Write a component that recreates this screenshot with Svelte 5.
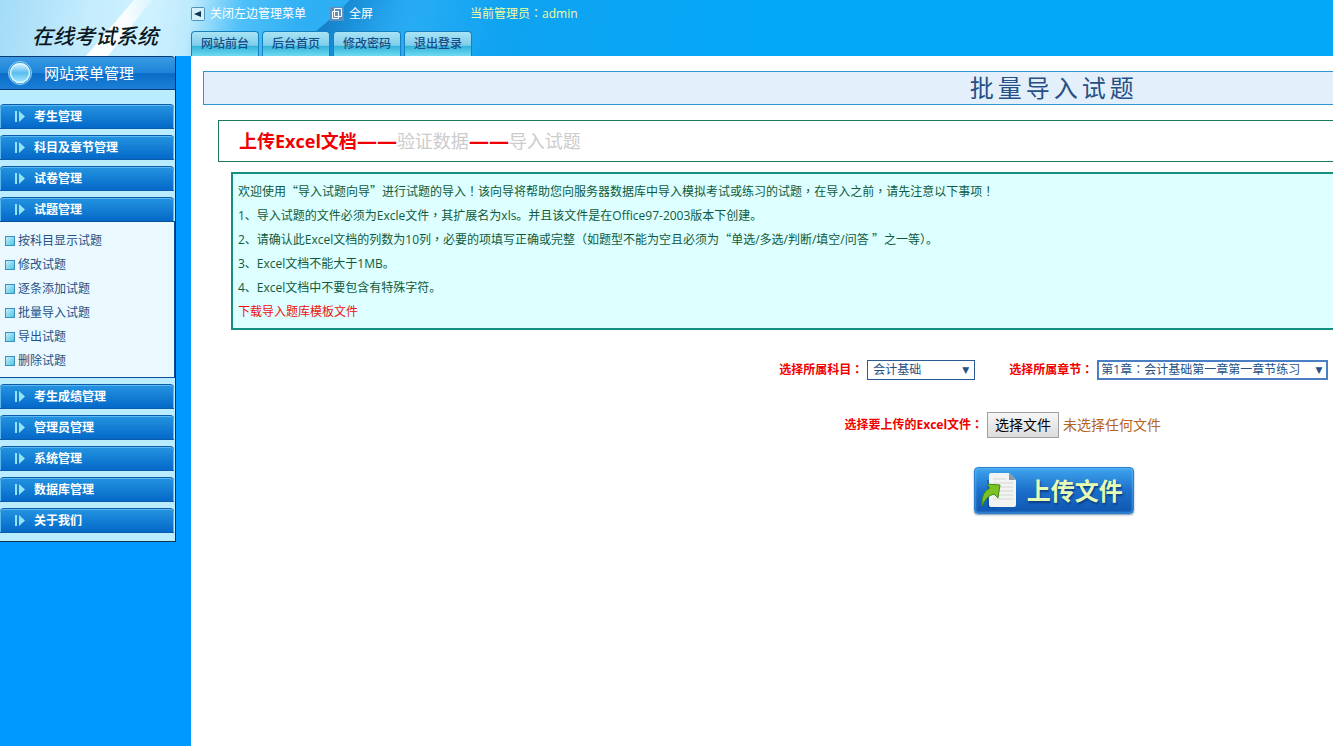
<script lang="ts">
  const tabs = ["网站前台", "后台首页", "修改密码", "退出登录"];

  const menus: { title: string; items?: string[] }[] = [
    { title: "考生管理" },
    { title: "科目及章节管理" },
    { title: "试卷管理" },
    {
      title: "试题管理",
      items: ["按科目显示试题", "修改试题", "逐条添加试题", "批量导入试题", "导出试题", "删除试题"],
    },
    { title: "考生成绩管理" },
    { title: "管理员管理" },
    { title: "系统管理" },
    { title: "数据库管理" },
    { title: "关于我们" },
  ];

  const notes = [
    "欢迎使用“导入试题向导”进行试题的导入！该向导将帮助您向服务器数据库中导入模拟考试或练习的试题，在导入之前，请先注意以下事项！",
    "1、导入试题的文件必须为Excle文件，其扩展名为xls。并且该文件是在Office97-2003版本下创建。",
    "2、请确认此Excel文档的列数为10列，必要的项填写正确或完整（如题型不能为空且必须为“单选/多选/判断/填空/问答 ”之一等）。",
    "3、Excel文档不能大于1MB。",
    "4、Excel文档中不要包含有特殊字符。",
  ];

  let open = $state("试题管理");
  let fileName = $state("未选择任何文件");
  let picker: HTMLInputElement;

  function toggle(title: string) {
    open = open === title ? "" : title;
  }
  function onPick() {
    fileName = picker.files?.[0]?.name ?? "未选择任何文件";
  }
</script>

<!-- full-width marks get the family that centres them in their cell -->
{#snippet zh(text: string)}
  {#each text.split(/([“”：，！（）]+)/) as part, i}{#if i % 2}<span class="mark" lang="zh-TW">{part}</span>{:else}{part}{/if}{/each}
{/snippet}

<div class="page" lang="zh-CN">
  <header>
    <svg class="swoosh" width="800" height="56" viewBox="0 0 800 56" aria-hidden="true">
      <defs>
        <linearGradient id="wedge" gradientUnits="userSpaceOnUse" x1="325" y1="20" x2="440" y2="62">
          <stop offset="0" stop-color="#1277c2" stop-opacity="0.85" />
          <stop offset="0.3" stop-color="#0f80cc" stop-opacity="0.5" />
          <stop offset="0.7" stop-color="#1b9be6" stop-opacity="0" />
        </linearGradient>
        <linearGradient id="streak" x1="0" x2="1" y1="0" y2="0">
          <stop offset="0" stop-color="#fff" />
          <stop offset="0.6" stop-color="#fff" stop-opacity="0.9" />
          <stop offset="1" stop-color="#fff" stop-opacity="0.2" />
        </linearGradient>
      </defs>
      <path d="M134 0h18l-44 56H86z" fill="url(#streak)" />
      <path d="M350 0h250v56H280q40-24 70-56z" fill="url(#wedge)" />
    </svg>
    <div class="logo">在线考试系统</div>
    <div class="top">
      <div class="tools">
        <button class="tool close">
          <svg width="14" height="14" viewBox="0 0 14 14" aria-hidden="true">
            <rect x="0.5" y="0.5" width="13" height="13" rx="1" fill="#d3f0fb" stroke="#4d93bd" />
            <path d="M3 7l7-3v6z" fill="#12334f" />
          </svg>
          关闭左边管理菜单
        </button>
        <button class="tool full">
          <svg width="14" height="14" viewBox="0 0 14 14" aria-hidden="true">
            <rect width="14" height="14" fill="#5b8fc0" />
            <path d="M4.500 1.500h7v8h-7zM2.500 4.500h6v7h-6z" fill="none" stroke="#fff" />
          </svg>
          全屏
        </button>
        <span class="admin">{@render zh("当前管理员：admin")}</span>
      </div>
      <nav class="tabs">
        {#each tabs as tab}
          <a href="#top">{tab}</a>
        {/each}
      </nav>
    </div>
  </header>

  <div class="body">
    <aside>
      <div class="menu">
        <h2>
          <svg width="26" height="26" viewBox="0 0 26 26" aria-hidden="true">
            <defs>
              <linearGradient id="ball" x1="0" x2="0" y1="0" y2="1">
                <stop offset="0" stop-color="#d9f5ff" />
                <stop offset="0.5" stop-color="#59bdf0" />
                <stop offset="1" stop-color="#a5ecff" />
              </linearGradient>
            </defs>
            <circle cx="13" cy="13" r="11.500" fill="#2a8fd8" stroke="#8ed3f5" />
            <circle cx="13" cy="13" r="9.500" fill="url(#ball)" stroke="#e2f8ff" stroke-width="1.500" />
          </svg>
          网站菜单管理
        </h2>
        {#each menus as m (m.title)}
          <button class="item" onclick={() => toggle(m.title)}>
            <svg width="12" height="12" viewBox="0 0 12 12" aria-hidden="true">
              <path d="M1 0h2v11H1zM5 0l6 5.500-6 5.500z" fill="#93e3f5" />
            </svg>
            {m.title}
          </button>
          {#if m.items && open === m.title}
            <ul>
              {#each m.items as sub}
                <li><a href="#sub"><i></i>{sub}</a></li>
              {/each}
            </ul>
          {/if}
        {/each}
      </div>
    </aside>

    <main>
      <div class="wide">
        <h1>批量导入试题</h1>
        <div class="steps">
          <b>上传Excel文档</b><b class="dash">——</b>验证数据<b class="dash">——</b>导入试题
        </div>
        <div class="notes">
          {#each notes as note}
            <p>{@render zh(note)}</p>
          {/each}
          <p><a href="#template">下载导入题库模板文件</a></p>
        </div>

        <form onsubmit={(e) => e.preventDefault()}>
          <div class="row">
            <label for="subject">{@render zh("选择所属科目：")}</label>
            <span class="pick subject">
              <select id="subject"><option>会计基础</option></select>
              <span class="arrow">▼</span>
            </span>
            <label for="chapter">{@render zh("选择所属章节：")}</label>
            <span class="pick chapter">
              <select id="chapter" lang="zh-TW"><option>第1章：会计基础第一章第一章节练习</option></select>
              <span class="arrow">▼</span>
            </span>
          </div>
          <div class="row file">
            <label for="excel">{@render zh("选择要上传的Excel文件：")}</label>
            <div class="chooser">
              <input id="excel" type="file" accept=".xls" hidden bind:this={picker} onchange={onPick} />
              <button type="button" onclick={() => picker.click()}>选择文件</button>
              <span>{fileName}</span>
            </div>
          </div>
          <button class="upload">
            <svg width="38" height="38" viewBox="0 0 38 38" aria-hidden="true">
              <path d="M6 8h10v28H6z" fill="#0b3f86" opacity="0.4" />
              <path d="M10 1h18l7 7v25q0 2-2 2H10q-2 0-2-2V3q0-2 2-2z" fill="#f3f4f2" />
              <path d="M28 1v7h7z" fill="#8c9aa5" />
              <path d="M12 7h13M12 11h20M12 15h20M12 19h20M12 23h20M12 27h20" stroke="#d3d6d5" />
              <path d="M1 34q-1-14 8-18l-3-4 13 1-2 13-4-4q-8 2-12 12z" fill="#7cc225" stroke="#3f8a12" />
            </svg>
            上传文件
          </button>
        </form>
      </div>
    </main>
  </div>
</div>

<style>
  :global(body) {
    margin: 0;
  }
  .page {
    min-height: 100vh;
    display: flex;
    flex-direction: column;
    overflow: hidden;
    background: #fff;
    font-family: "Open Sans", "Noto Sans CJK SC", sans-serif;
    font-size: 12px;
    line-height: 24px;
    color: #265085;
  }
  .mark {
    font-family: "Noto Sans CJK TC", sans-serif;
    line-height: 1;
  }
  button,
  select {
    font: inherit;
    cursor: pointer;
  }
  a {
    color: inherit;
    text-decoration: none;
  }

  header {
    position: relative;
    display: flex;
    height: 56px;
    background: linear-gradient(100deg, #a3dbf7 0, #c4ecfd 90px, #d0f2ff 150px, #bdeafd 190px, #4fc0f8 240px, #2fb0f4 300px, #2aadf5 400px, #0fa3f1 500px, #03a8f9 780px);
  }
  .swoosh {
    position: absolute;
    left: 0;
    top: 0;
  }
  .logo {
    position: relative;
    width: 158px;
    padding: 20px 0 0 32px;
    box-sizing: border-box;
    margin-right: 33px;
    font-size: 21px;
    line-height: 32px;
    font-weight: 500;
    font-style: italic;
    color: #0b1822;
    white-space: nowrap;
  }
  .top {
    position: relative;
    flex: 1;
    display: flex;
    flex-direction: column;
    justify-content: space-between;
  }
  .tools {
    display: flex;
    align-items: center;
    height: 28px;
  }
  .tool {
    display: flex;
    align-items: center;
    gap: 5px;
    padding: 0;
    border: 0;
    background: none;
    color: #fff;
  }
  .full {
    margin: 0 97px 0 24px;
  }
  .admin {
    color: #f4fb9c;
  }
  .tabs {
    display: flex;
    gap: 3px;
  }
  .tabs a {
    width: 66px;
    height: 24px;
    border: 1px solid #1681bf;
    border-bottom: 0;
    border-radius: 4px 4px 0 0;
    background: linear-gradient(#a9e4f5 0, #7fcdec 55%, #35b4dc 60%, #6fdaf0 100%);
    text-align: center;
    color: #174d87;
    font-weight: 500;
  }

  .body {
    flex: 1;
    display: flex;
  }
  aside {
    flex: none;
    width: 191px;
    background: #09f;
  }
  .menu {
    width: 175px;
    padding-bottom: 2px;
    border-right: 1px solid #0b2f55;
    border-bottom: 1px solid #0b2f55;
    background: #b9ecff;
  }
  h2 {
    display: flex;
    align-items: center;
    gap: 11px;
    height: 32px;
    margin: 0 0 14px;
    padding-left: 7px;
    border: 1px solid #0a3a78;
    border-left: 0;
    border-right: 0;
    border-radius: 0 4px 0 0;
    background: linear-gradient(#3a9ae4 0, #1c84d8 50%, #0a6cc8 52%, #1b7fd6 100%);
    font-size: 15px;
    font-weight: 400;
    color: #fff;
  }
  .item {
    display: flex;
    align-items: center;
    gap: 8px;
    width: 174px;
    height: 25px;
    margin-bottom: 6px;
    padding: 0 0 0 14px;
    border: 1px solid #0b5cab;
    border-width: 1px 0 1px 0;
    border-radius: 4px 4px 0 0;
    box-shadow: inset 0 1px #5cb8ee, inset 1px 0 #5cb8ee, inset -1px 0 #5cb8ee;
    background: linear-gradient(#2494e0, #0468c8);
    color: #fff;
    font-weight: 700;
  }
  ul {
    list-style: none;
    margin: -7px 0 6px;
    padding: 7px 0 4px;
    border: 1px solid #0b4f96;
    border-left: 0;
    background: #e9f9ff;
  }
  li a {
    display: flex;
    align-items: center;
    gap: 3px;
    padding-left: 5px;
  }
  li i {
    width: 8px;
    height: 8px;
    border: 1px solid #3a93b8;
    background: linear-gradient(135deg, #c4f0fa, #4fc4e2);
  }

  main {
    flex: 1;
    min-width: 0;
  }
  /* the import pages are laid out wider than the frame they open in */
  .wide {
    width: 149%;
    padding: 15px 0 0 12px;
  }
  h1 {
    margin: 0 0 15px;
    border: 1px solid #2f94cf;
    background: #e3effa;
    font-size: 24px;
    line-height: 32px;
    font-weight: 400;
    letter-spacing: 4px;
    text-align: center;
  }
  .steps {
    margin: 0 15px 10px;
    padding: 0 20px;
    border: 1px solid #1d7a58;
    font-size: 18px;
    line-height: 40px;
    color: #ccc;
  }
  .steps b {
    color: #f00000;
  }
  .steps .dash {
    font-size: 20px;
    line-height: 1;
  }
  .notes {
    margin: 0 28px 30px;
    padding: 6px 5px 4px;
    border: 2px solid #148f80;
    background: #dff;
    color: #0f5a3c;
  }
  .notes p {
    margin: 0;
  }
  .notes a {
    color: #f01010;
  }

  form {
    display: flex;
    flex-direction: column;
    align-items: center;
  }
  .row {
    display: flex;
    align-items: center;
    height: 20px;
  }
  label {
    color: #f00000;
    font-weight: 700;
    margin-right: 4px;
  }
  .pick {
    position: relative;
    display: flex;
  }
  .subject {
    width: 108px;
    margin-right: 34px;
  }
  .chapter {
    width: 231px;
  }
  select {
    appearance: none;
    width: 100%;
    height: 20px;
    padding: 0 5px;
    border: 1px solid #2c5a94;
    border-radius: 0;
    background: #fff;
    line-height: 18px;
    color: #265085;
  }
  .chapter select {
    padding: 0 2px;
    border: 2px solid #4a7fc4;
    line-height: 16px;
  }
  .arrow {
    position: absolute;
    right: 6px;
    top: 0;
    font-family: "DejaVu Sans", sans-serif;
    font-size: 9px;
    line-height: 20px;
    pointer-events: none;
  }
  .file {
    height: 26px;
    margin: 32px 0 29px;
  }
  .chooser {
    display: flex;
    align-items: center;
    gap: 4px;
    width: 276px;
    font-size: 14px;
    color: #b5651d;
  }
  .chooser button {
    width: 72px;
    height: 26px;
    padding: 0;
    border: 1px solid #a0a0a0;
    background: linear-gradient(#f6f6f6, #dcdcdc);
    color: #000;
    line-height: 22px;
  }
  .upload {
    display: flex;
    align-items: center;
    gap: 8px;
    width: 160px;
    height: 47px;
    padding: 0 0 0 6px;
    border: 1px solid #2a7fd0;
    border-radius: 4px;
    background: linear-gradient(#3fa4ee, #1c6fcb 50%, #0f56b0);
    box-shadow: inset 0 0 3px #6cc8ff, 0 1px 2px #7d95ad;
    color: #e6fbb4;
    font-size: 24px;
    font-weight: 700;
    white-space: nowrap;
    text-shadow: 1px 2px 2px #0a3f86;
  }
</style>
